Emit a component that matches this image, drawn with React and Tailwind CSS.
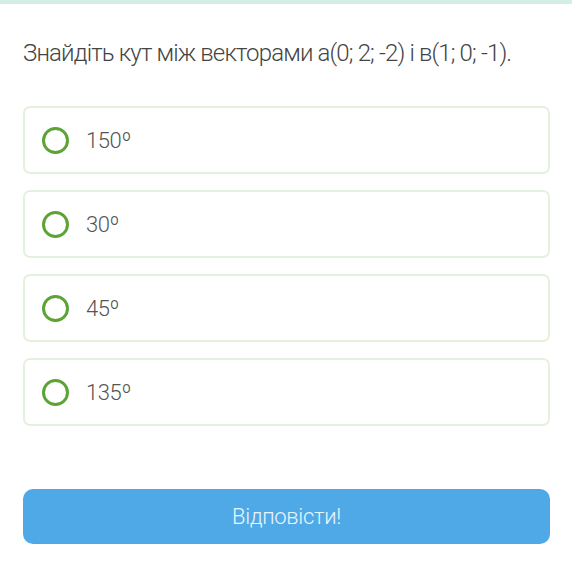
import React from "react";

const options = ["150º", "30º", "45º", "135º"];

export default function App() {
  return (
    <div className="w-[572px] h-[574px] bg-white overflow-hidden" style={{ fontFamily: "Roboto, 'Noto Sans', sans-serif" }}>
      <div className="h-[4px] bg-[#d3eee5]" />
      <div className="px-[23px]">
        <h1 className="mt-[33px] text-[24px] leading-[32px] font-light text-[#444] tracking-[-0.85px]">
          Знайдіть кут між векторами а(0; 2; -2) і в(1; 0; -1).
        </h1>
        <div className="mt-[37px] flex flex-col gap-[16px] w-[527px]">
          {options.map((o) => (
            <div key={o} className="h-[68px] rounded-[7px] border-2 border-[#e5f1dc] flex items-center pl-[17px]">
              <div className="w-[27px] h-[27px] rounded-full border-[3px] border-[#5ea336]" />
              <span className="ml-[17px] text-[22px] font-light text-[#555] tracking-[-0.4px]">{o}</span>
            </div>
          ))}
        </div>
        <button className="mt-[63px] w-[527px] h-[55px] rounded-[10px] bg-[#4ea9e6] text-[#e8f6ff] text-[22px] font-light tracking-[-0.3px]">
          Відповісти!
        </button>
      </div>
    </div>
  );
}
